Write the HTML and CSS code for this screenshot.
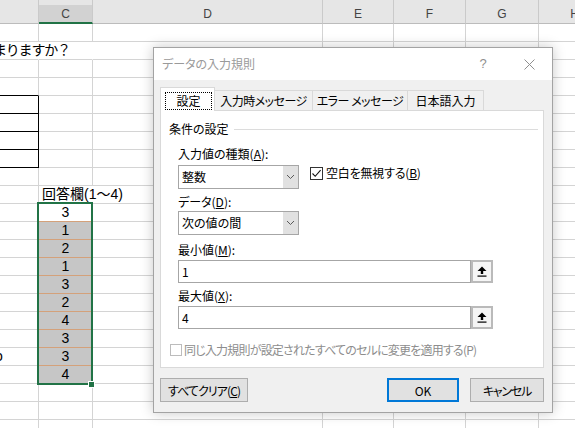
FILE: index.html
```html
<!DOCTYPE html>
<html lang="ja">
<head>
<meta charset="utf-8">
<title>データの入力規則</title>
<link rel="stylesheet" href="styles.css">
</head>
<body>
<div class="sheet">
  <div class="row head"><div></div><div class="hsel">C</div><div>D</div><div>E</div><div>F</div><div>G</div><div>H</div></div>
  <div class="row"><div></div><div></div><div></div><div></div><div></div><div></div><div></div></div>
  <div class="row"><div class="ov"><span class="lead">まりますか？</span></div><div class="ov"></div><div></div><div></div><div></div><div></div><div></div></div>
  <div class="row"><div></div><div></div><div></div><div></div><div></div><div></div><div></div></div>
  <div class="row"><div class="bb"></div><div></div><div></div><div></div><div></div><div></div><div></div></div>
  <div class="row"><div class="bx"></div><div></div><div></div><div></div><div></div><div></div><div></div></div>
  <div class="row"><div class="bx"></div><div></div><div></div><div></div><div></div><div></div><div></div></div>
  <div class="row"><div class="bx"></div><div></div><div></div><div></div><div></div><div></div><div></div></div>
  <div class="row"><div class="bx"></div><div></div><div></div><div></div><div></div><div></div><div></div></div>
  <div class="row"><div></div><div></div><div></div><div></div><div></div><div></div><div></div></div>
  <div class="row"><div></div><div class="ov caption">回答欄(1～4)</div><div></div><div></div><div></div><div></div><div></div></div>
  <div class="row"><div></div><div class="num orange">3</div><div></div><div></div><div></div><div></div><div></div></div>
  <div class="row"><div></div><div class="num shade orange">1</div><div></div><div></div><div></div><div></div><div></div></div>
  <div class="row"><div></div><div class="num shade orange">2</div><div></div><div></div><div></div><div></div><div></div></div>
  <div class="row"><div></div><div class="num shade orange">1</div><div></div><div></div><div></div><div></div><div></div></div>
  <div class="row"><div></div><div class="num shade orange">3</div><div></div><div></div><div></div><div></div><div></div></div>
  <div class="row"><div></div><div class="num shade orange">2</div><div></div><div></div><div></div><div></div><div></div></div>
  <div class="row"><div></div><div class="num shade orange">4</div><div></div><div></div><div></div><div></div><div></div></div>
  <div class="row"><div></div><div class="num shade orange">3</div><div></div><div></div><div></div><div></div><div></div></div>
  <div class="row"><div><span class="lead2">o</span></div><div class="num shade orange">3</div><div></div><div></div><div></div><div></div><div></div></div>
  <div class="row"><div></div><div class="num shade orange">4</div><div></div><div></div><div></div><div></div><div></div></div>
  <div class="row"><div></div><div></div><div></div><div></div><div></div><div></div><div></div></div>
  <div class="row"><div></div><div></div><div></div><div></div><div></div><div></div><div></div></div>
  <div class="row"><div></div><div></div><div></div><div></div><div></div><div></div><div></div></div>
</div>
<div class="selection"></div>
<div class="handle"></div>

<div class="dialog">
  <div class="titlebar">
    <span class="title">データの入力規則</span>
    <span class="tbtn help">?</span>
    <span class="tbtn close"><svg width="11" height="11" viewBox="0 0 11 11"><path d="M0.5 0.5 L10.5 10.5 M10.5 0.5 L0.5 10.5" stroke="#8f8f8f" stroke-width="1" fill="none"/></svg></span>
  </div>
  <div class="tabs">
    <div class="tab active"><span class="focus">設定</span></div>
    <div class="tab t2">入力時メッセージ</div>
    <div class="tab t3">エラー メッセージ</div>
    <div class="tab t4">日本語入力</div>
  </div>
  <div class="panel">
    <div class="group"><span>条件の設定</span><span class="rule"></span></div>
    <div class="lbl m9">入力値の種類(<u>A</u>):</div>
    <div class="fieldrow m3">
      <div class="combo"><span class="val">整数</span><span class="dd"><svg width="9" height="6" viewBox="0 0 9 6"><path d="M1 1 L4.5 4.5 L8 1" stroke="#5a5a5a" stroke-width="1" fill="none"/></svg></span></div>
      <div class="check"><span class="box"><svg width="11" height="11" viewBox="0 0 11 11"><path d="M1.5 5.5 L4.2 8.3 L9.6 2.2" stroke="#111" stroke-width="1.1" fill="none"/></svg></span><span>空白を無視する(<u>B</u>)</span></div>
    </div>
    <div class="lbl m5">データ(<u>D</u>):</div>
    <div class="fieldrow m1">
      <div class="combo"><span class="val">次の値の間</span><span class="dd"><svg width="9" height="6" viewBox="0 0 9 6"><path d="M1 1 L4.5 4.5 L8 1" stroke="#5a5a5a" stroke-width="1" fill="none"/></svg></span></div>
    </div>
    <div class="lbl m7">最小値(<u>M</u>):</div>
    <div class="fieldrow m2">
      <div class="inp"><span class="val">1</span></div>
      <div class="ref"><svg width="10" height="11" viewBox="0 0 10 11"><path d="M5 0.5 L9.5 5 L6.2 5 L6.2 8 L3.8 8 L3.8 5 L0.5 5 Z" fill="#000"/><rect x="0.5" y="9.5" width="9" height="1.2" fill="#000"/></svg></div>
    </div>
    <div class="lbl m5">最大値(<u>X</u>):</div>
    <div class="fieldrow m2">
      <div class="inp"><span class="val">4</span></div>
      <div class="ref"><svg width="10" height="11" viewBox="0 0 10 11"><path d="M5 0.5 L9.5 5 L6.2 5 L6.2 8 L3.8 8 L3.8 5 L0.5 5 Z" fill="#000"/><rect x="0.5" y="9.5" width="9" height="1.2" fill="#000"/></svg></div>
    </div>
    <div class="dis"><span class="dbox"></span><span class="distext">同じ入力規則が設定されたすべてのセルに変更を適用する(P)</span></div>
  </div>
  <div class="btns">
    <button class="btn clear">すべてクリア(<u>C</u>)</button>
    <button class="btn ok">OK</button>
    <button class="btn cancel">キャンセル</button>
  </div>
</div>
</body>
</html>
```
FILE: styles.css
```css
* { box-sizing: border-box; }
html, body { margin: 0; padding: 0; }
body {
  width: 575px;
  height: 428px;
  overflow: hidden;
  position: relative;
  background: #fff;
  font-family: "Liberation Sans", "Noto Sans CJK JP", sans-serif;
}

/* ---------- spreadsheet ---------- */
.sheet {
  display: flex;
  flex-direction: column;
  font-feature-settings: "palt";
}
.row {
  display: grid;
  grid-template-columns: 39px 54px 230px 71px 72px 73px 72px;
  height: 18px;
}
.row > div {
  border-right: 1px solid #d4d4d4;
  border-bottom: 1px solid #d4d4d4;
  font-size: 14px;
  line-height: 17px;
  white-space: nowrap;
  color: #000;
}
.head { height: 24px; background: #e6e6e6; }
.head > div {
  border-right: 1px solid #cacaca;
  border-bottom: 1px solid #bcbcbc;
  text-align: center;
  font-size: 12px;
  line-height: 16px;
  padding-top: 6px;
  color: #444;
}
.head > .hsel {
  background: linear-gradient(#e6e6e6 5px, #d2d2d2 5px);
  border-bottom: 2px solid #217346;
}
.row > .ov { border-right-color: transparent; }
.lead { display: inline-block; margin-left: -7px; font-feature-settings: normal; letter-spacing: -1.2px; }
.lead2 { display: inline-block; margin-left: -5px; }
.caption { padding-left: 3px; }
.row > .bb { border-bottom-color: #000; }
.row > .bx { border-bottom-color: #000; border-right-color: #000; }
.num { text-align: center; }
.row > .shade { background: #c6c6c6; }
.row > .orange { border-bottom-color: #d4a17a; }

.selection {
  position: absolute;
  left: 37px;
  top: 202px;
  width: 56px;
  height: 183px;
  border: 2px solid #217346;
}
.handle {
  position: absolute;
  left: 88px;
  top: 381px;
  width: 7px;
  height: 7px;
  background: #217346;
  border: 1px solid #fff;
}

/* ---------- dialog ---------- */
.dialog {
  position: absolute;
  left: 153px;
  top: 47px;
  width: 400px;
  height: 366px;
  border: 1px solid #a3a3a3;
  background: #f0f0f0;
  box-shadow: 0 0 12px rgba(0, 0, 0, 0.22);
  font-family: "Noto Sans CJK JP", sans-serif;
  font-size: 12px;
  font-feature-settings: "palt";
  color: #000;
  display: flex;
  flex-direction: column;
}
.titlebar {
  height: 32px;
  background: #fff;
  display: flex;
  align-items: center;
}
.title {
  flex: 1;
  padding-left: 8px;
  color: #9a9a9a;
  line-height: 16px;
}
.tbtn {
  width: 46px;
  height: 32px;
  display: flex;
  align-items: center;
  justify-content: center;
  color: #8f8f8f;
}
.help { font-family: "Liberation Sans", sans-serif; font-size: 13px; padding-bottom: 1px; }

.tabs {
  display: flex;
  align-items: flex-end;
  height: 23px;
  margin: 7px 0 0 6px;
}
.tab {
  height: 20px;
  border-top: 1px solid #d9d9d9;
  border-right: 1px solid #d9d9d9;
  display: flex;
  align-items: center;
  justify-content: center;
  line-height: 16px;
  letter-spacing: -0.5px;
  white-space: nowrap;
}
.tab.active {
  width: 55px;
  height: 24px;
  margin-bottom: -1px;
  border-left: 1px solid #d9d9d9;
  background: #fff;
  position: relative;
  z-index: 1;
  align-items: flex-start;
  justify-content: flex-start;
  padding: 4px 0 0 4px;
  letter-spacing: 0;
}
.focus {
  width: 47px;
  height: 18px;
  border: 1px dotted #000;
  display: flex;
  align-items: center;
  justify-content: center;
}
.t2 { width: 98px; }
.t3 { width: 95px; }
.t4 { width: 76px; letter-spacing: 0; }

.panel {
  margin-left: 6px;
  width: 384px;
  height: 258px;
  border: 1px solid #d9d9d9;
  background: #fff;
  padding-top: 10px;
  display: flex;
  flex-direction: column;
}
.group {
  display: flex;
  align-items: center;
  height: 16px;
  line-height: 16px;
  padding-left: 8px;
  margin-right: 5px;
}
.rule {
  flex: 1;
  height: 1px;
  background: #dcdcdc;
  margin-left: 5px;
}
.lbl {
  height: 16px;
  line-height: 16px;
  margin-left: 17px;
}
.m1 { margin-top: 1px; }
.m2 { margin-top: 2px; }
.m3 { margin-top: 3px; }
.m5 { margin-top: 5px; }
.m7 { margin-top: 7px; }
.m9 { margin-top: 9px; }
.fieldrow {
  display: flex;
  align-items: flex-start;
  margin-left: 17px;
}
.combo {
  width: 121px;
  height: 24px;
  border: 1px solid #a6a6a6;
  background: #fff;
  display: flex;
}
.val {
  flex: 1;
  padding-left: 3px;
  line-height: 22px;
}
.inp .val { line-height: 21px; }
.dd {
  width: 15px;
  background: #e1e1e1;
  display: flex;
  align-items: center;
  justify-content: center;
}
.check {
  display: flex;
  align-items: center;
  margin-left: 11px;
  margin-top: 1px;
  height: 14px;
  line-height: 14px;
  letter-spacing: -0.2px;
}
.box {
  width: 13px;
  height: 13px;
  border: 1px solid #333;
  background: #fff;
  display: flex;
  align-items: center;
  justify-content: center;
  margin-right: 3px;
}
.inp {
  width: 293px;
  height: 23px;
  border: 1px solid #a6a6a6;
  background: #fff;
  display: flex;
}
.ref {
  width: 22px;
  height: 23px;
  border: 2px solid #bababa;
  background: #f5f5f5;
  display: flex;
  align-items: center;
  justify-content: center;
}
.dis {
  display: flex;
  align-items: center;
  margin: 13px 0 0 9px;
  height: 16px;
  line-height: 16px;
  color: #8d8d8d;
}
.distext { letter-spacing: -0.8px; white-space: nowrap; }
.dbox {
  width: 12px;
  height: 12px;
  border: 1px solid #bcbcbc;
  background: #fff;
  margin-right: 2px;
}

.btns {
  display: flex;
  margin: 10px 8px 0 6px;
}
.btn {
  height: 24px;
  border: 1px solid #adadad;
  background: #e1e1e1;
  font: inherit;
  font-feature-settings: "palt";
  color: #000;
  padding: 0;
  display: flex;
  align-items: center;
  justify-content: center;
  white-space: nowrap;
}
.clear { width: 88px; letter-spacing: -0.9px; }
.ok { width: 72px; margin-left: auto; border: 2px solid #0078d7; }
.cancel { width: 74px; margin-left: 11px; letter-spacing: -1.2px; }
```
